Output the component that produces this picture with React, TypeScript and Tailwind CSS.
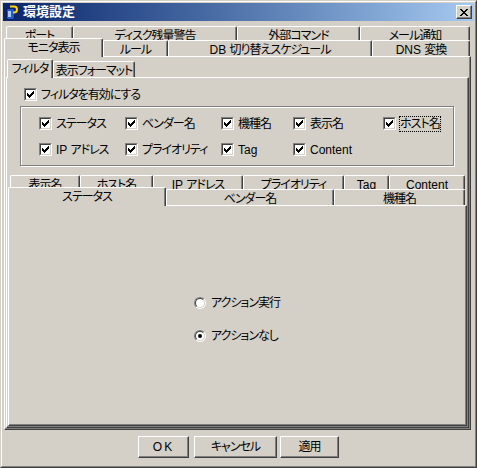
import React from "react";

const face =
  "font-['Liberation_Sans','Noto_Sans_CJK_JP',sans-serif] [font-feature-settings:'palt'] tracking-[-1px]";
const panel =
  "border border-t-white border-l-white border-r-[#404040] border-b-[#404040] shadow-[inset_-1px_-1px_0_#808080]";

// latin runs keep normal spacing, kana/kanji runs are tightened like the bitmap UI font
function txt(s: string) {
  return s.split(/([\x20-\x7e]+)/).map((p, i) =>
    /[\x20-\x7e]/.test(p) ? (
      <span key={i} className="tracking-normal">
        {p}
      </span>
    ) : (
      p
    )
  );
}

type TabProps = { label: string; w: string; sel?: boolean; back?: boolean };

function Tab({ label, w, sel, back }: TabProps) {
  const h = back ? "h-[18px]" : sel ? "relative z-10 -mb-[1px] h-[19px]" : "h-[16px]";
  return (
    <div
      className={`flex shrink-0 justify-center overflow-hidden whitespace-pre rounded-t-[2px] border-x border-t border-l-white border-t-white border-r-[#404040] bg-[#d4d0c8] pt-[2px] leading-[14px] shadow-[inset_-1px_0_0_#808080] ${w} ${h}`}
    >
      <span>{txt(label)}</span>
    </div>
  );
}

function Check() {
  return (
    <span className="inline-block h-[13px] w-[13px] shrink-0 border border-t-[#808080] border-l-[#808080] border-b-white border-r-white">
      <span className="block h-full w-full border border-t-[#404040] border-l-[#404040] border-b-[#d4d0c8] border-r-[#d4d0c8] bg-white">
        <svg width="9" height="9" viewBox="0 0 9 9" className="block">
          <path
            transform="translate(1 1)"
            d="M0 2h1v3H0zM1 3h1v3H1zM2 4h1v3H2zM3 3h1v3H3zM4 2h1v3H4zM5 1h1v3H5zM6 0h1v3H6z"
            fill="#000"
          />
        </svg>
      </span>
    </span>
  );
}

function CheckItem({ label, w, focus }: { label: string; w: string; focus?: boolean }) {
  return (
    <div className={`flex h-[13px] items-center ${w}`}>
      <Check />
      <span
        className={`ml-[4px] whitespace-pre leading-[14px] ${focus ? "outline-1 outline-offset-0 outline-dotted outline-black" : ""}`}
      >
        {txt(label)}
      </span>
    </div>
  );
}

function Radio({ label, on }: { label: string; on?: boolean }) {
  return (
    <div className="flex h-[20px] items-center">
      <span className="flex h-[12px] w-[12px] shrink-0 rounded-full border border-t-[#808080] border-l-[#808080] border-b-white border-r-white">
        <span className="flex h-full w-full items-center justify-center rounded-full border border-t-[#404040] border-l-[#404040] border-b-[#d4d0c8] border-r-[#d4d0c8] bg-white">
          {on && <span className="h-[4px] w-[4px] rounded-full bg-black" />}
        </span>
      </span>
      <span className="ml-[5px] whitespace-nowrap leading-[14px]">{label}</span>
    </div>
  );
}

function Btn({ label, w, extra = "" }: { label: string; w: string; extra?: string }) {
  return (
    <button
      className={`h-[22px] border border-t-white border-l-white border-b-[#404040] border-r-[#404040] bg-[#d4d0c8] leading-[14px] shadow-[inset_-1px_-1px_0_#808080] ${w} ${extra}`}
    >
      {label}
    </button>
  );
}

function AppIcon() {
  return (
    <svg width="16" height="16" viewBox="0 0 16 16" className="shrink-0">
      <rect x="2.5" y="4.5" width="8" height="11" rx="2" fill="#2358c8" stroke="#0b1f5e" />
      <rect x="4" y="7" width="3" height="6" fill="#a8cbff" />
      <path d="M6 2.5h4a3 3 0 0 1 0 6H9" fill="none" stroke="#ffd400" strokeWidth="2" />
    </svg>
  );
}

const topBack = [
  { label: "ポート", w: "w-[67px]" },
  { label: "ディスク残量警告", w: "w-[164px]" },
  { label: "外部コマンド", w: "w-[123px]" },
  { label: "メール通知", w: "w-[110px]" },
];
const topFront = [
  { label: "モニタ表示", w: "w-[99px]", sel: true },
  { label: "ルール", w: "w-[65px]" },
  { label: "DB 切り替えスケジュール", w: "w-[204px]" },
  { label: "DNS 変換", w: "w-[98px]" },
];
const innerBack = [
  { label: "表示名", w: "w-[70px]" },
  { label: "ホスト名", w: "w-[73px]" },
  { label: "IP アドレス", w: "w-[90px]" },
  { label: "プライオリティ", w: "w-[101px]" },
  { label: "Tag", w: "w-[45px]" },
  { label: "Content", w: "w-[76px]" },
];
const innerFront = [
  { label: "ステータス", w: "w-[158px]", sel: true },
  { label: "ベンダー名", w: "w-[168px]" },
  { label: "機種名", w: "w-[131px]" },
];

export default function App() {
  return (
    <div
      className={`h-[468px] w-[477px] border border-t-[#d4d0c8] border-l-[#d4d0c8] border-r-[#404040] border-b-[#404040] bg-[#d4d0c8] text-[12px] text-black ${face}`}
    >
      <div className="flex h-full flex-col border border-t-white border-l-white border-r-[#808080] border-b-[#808080] p-[1px]">
        {/* title bar */}
        <div className="flex h-[18px] shrink-0 items-center bg-linear-to-r from-[#0a246a] to-[#a6caf0] pl-[1px] pr-[2px]">
          <AppIcon />
          <span className="ml-[3px] text-[13px] font-bold leading-[18px] tracking-normal text-white">環境設定</span>
          <button className="ml-auto flex h-[14px] w-[16px] items-center justify-center border border-t-white border-l-white border-b-[#404040] border-r-[#404040] bg-[#d4d0c8] shadow-[inset_-1px_-1px_0_#808080]">
            <svg width="8" height="7" viewBox="0 0 8 7">
              <path
                d="M0 0h2v1H0zM6 0h2v1H6zM1 1h2v1H1zM5 1h2v1H5zM2 2h4v1H2zM3 3h2v1H3zM2 4h4v1H2zM1 5h2v1H1zM5 5h2v1H5zM0 6h2v1H0zM6 6h2v1H6z"
                fill="#000"
              />
            </svg>
          </button>
        </div>

        {/* top tabbed pane */}
        <div className="ml-[1px] mt-[5px] flex w-[467px] flex-col">
          <div className="flex h-[14px] overflow-hidden pl-[2px]">
            {topBack.map((t) => (
              <Tab key={t.label} {...t} back />
            ))}
          </div>
          <div className="-mt-[2px] flex h-[18px] items-end">
            {topFront.map((t) => (
              <Tab key={t.label} {...t} />
            ))}
          </div>
          <div className={`flex h-[374px] flex-col pb-[1px] pr-[1px] ${panel}`}>
            {/* filter / format pane */}
            <div className="ml-[1px] mt-[2px] flex flex-1 flex-col">
              <div className="flex h-[18px] items-end pl-[1px]">
                <Tab label="フィルタ" w="w-[46px]" sel />
                <Tab label="表示フォーマット" w="w-[82px]" />
              </div>
              <div className={`flex flex-1 flex-col pb-[1px] pr-[1px] ${panel}`}>
                <div className="ml-[17px] mt-[10px]">
                  <CheckItem label="フィルタを有効にする" w="" />
                </div>
                <div className="ml-[13px] mt-[5px] h-[60px] w-[434px] shrink-0 border border-[#808080] pl-[18px] pt-[10px] shadow-[inset_1px_1px_0_white,1px_1px_0_white]">
                  <div className="flex">
                    <CheckItem label="ステータス" w="w-[86px]" />
                    <CheckItem label="ベンダー名" w="w-[96px]" />
                    <CheckItem label="機種名" w="w-[72px]" />
                    <CheckItem label="表示名" w="w-[90px]" />
                    <CheckItem label="ホスト名" w="" focus />
                  </div>
                  <div className="mt-[13px] flex">
                    <CheckItem label="IP アドレス" w="w-[86px]" />
                    <CheckItem label="プライオリティ" w="w-[96px]" />
                    <CheckItem label="Tag" w="w-[72px]" />
                    <CheckItem label="Content" w="w-[90px]" />
                  </div>
                </div>

                {/* column tabs */}
                <div className="ml-[1px] mt-[9px] flex flex-1 flex-col">
                  <div className="flex h-[14px] overflow-hidden pl-[2px]">
                    {innerBack.map((t) => (
                      <Tab key={t.label} {...t} back />
                    ))}
                  </div>
                  <div className="-mt-[2px] flex h-[18px] items-end">
                    {innerFront.map((t) => (
                      <Tab key={t.label} {...t} />
                    ))}
                  </div>
                  <div className={`flex flex-1 flex-col items-center pb-[1px] pr-[1px] pt-[87px] ${panel}`}>
                    <div className="flex flex-col items-start gap-[13px]">
                      <Radio label="アクション実行" />
                      <Radio label="アクションなし" on />
                    </div>
                  </div>
                </div>
              </div>
            </div>
          </div>
        </div>

        {/* buttons */}
        <div className="flex h-[35px] shrink-0 justify-center pt-[6px]">
          <Btn label="OK" w="w-[51px]" extra="tracking-[2px]" />
          <div className="w-[5px]" />
          <Btn label="キャンセル" w="w-[83px]" />
          <div className="w-[3px]" />
          <Btn label="適用" w="w-[59px]" />
        </div>
      </div>
    </div>
  );
}
